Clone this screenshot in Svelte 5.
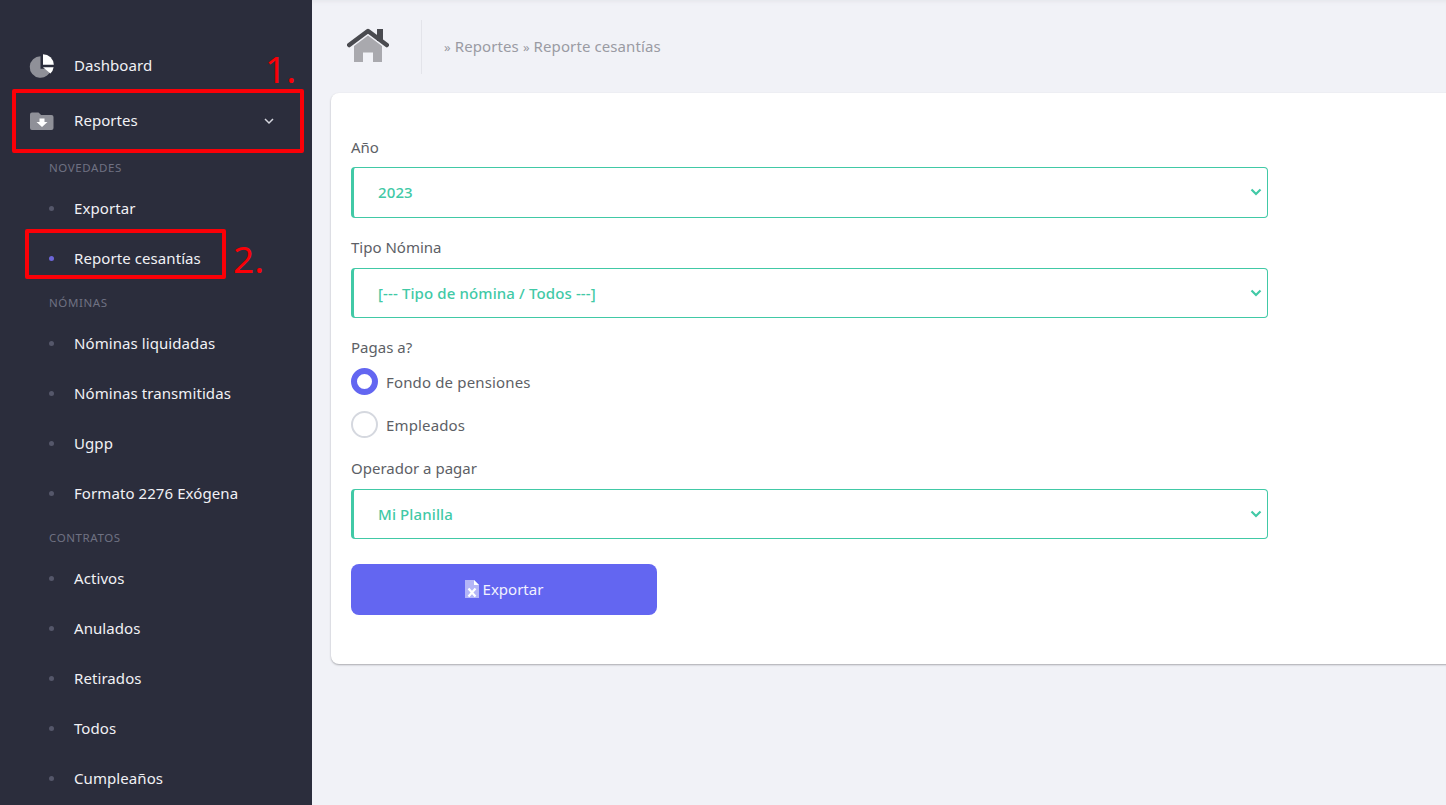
<script lang="ts">
  const groups = [
    { title: 'NOVEDADES', items: ['Exportar', 'Reporte cesantías'] },
    { title: 'NÓMINAS', items: ['Nóminas liquidadas', 'Nóminas transmitidas', 'Ugpp', 'Formato 2276 Exógena'] },
    { title: 'CONTRATOS', items: ['Activos', 'Anulados', 'Retirados', 'Todos', 'Cumpleaños'] }
  ];
  const active = 'Reporte cesantías';
  let pagas = $state('fondo');
</script>

<div class="layout">
  <aside class="sidebar">
    <a class="nav-item">
      <svg class="nav-icon" viewBox="0 0 26 26">
        <path d="M11.500 3.200a10.800 10.800 0 1 0 10.700 12.600H11.500z" fill="#8f9098" />
        <path d="M14 1.200a11 11 0 0 1 10.800 10.600H14z" fill="#fff" />
        <path d="M14 14.200h10.600a11 11 0 0 1-3.200 6.400z" fill="#fff" />
      </svg>
      <span>Dashboard</span>
    </a>
    <a class="nav-item">
      <svg class="nav-icon" viewBox="0 0 26 26">
        <path d="M1 6.500a2 2 0 0 1 2-2h6.500l2.600 2.600h10.400a2 2 0 0 1 2 2v11a2 2 0 0 1-2 2H3a2 2 0 0 1-2-2z" fill="#8f9098" />
        <path d="M10.500 10.500h5v3.500h3l-5.500 5-5.500-5h3z" fill="#fff" />
      </svg>
      <span>Reportes</span>
      <svg class="caret" viewBox="0 0 12 12"><path d="M2 4l4 4 4-4" fill="none" stroke="#d5d6de" stroke-width="1.500" /></svg>
    </a>
    {#each groups as group}
      <div class="nav-title">{group.title}</div>
      {#each group.items as item}
        <a class="sub-item" class:active={item === active}>
          <i class="dot"></i>
          <span>{item}</span>
        </a>
      {/each}
    {/each}
  </aside>

  <main class="main">
    <header class="page-head">
      <svg class="home" viewBox="0 0 42 36">
        <path d="M7 18 21 7.500 35 18v16h-9v-9.500H16V34H7z" fill="#a9a9ae" />
        <path d="M30 1h6v12h-6z" fill="#4a4b50" />
        <path d="M2.200 17 21 3l18.800 14" fill="none" stroke="#4a4b50" stroke-width="4.500" stroke-linecap="round" stroke-linejoin="round" />
      </svg>
      <div class="head-divider"></div>
      <div class="crumbs"><small>»</small> Reportes <small>»</small> Reporte cesantías</div>
    </header>

    <section class="card">
      <div class="field">
        <label for="anio">Año</label>
        <div class="select-wrap">
          <select id="anio" class="tall"><option>2023</option></select>
          <svg class="chevron" viewBox="0 0 12 8"><path d="M1.500 1.500 6 6l4.500-4.500" fill="none" stroke="#41c9a6" stroke-width="2.200" /></svg>
        </div>
      </div>
      <div class="field">
        <label for="tipo">Tipo Nómina</label>
        <div class="select-wrap">
          <select id="tipo"><option>[--- Tipo de nómina / Todos ---]</option></select>
          <svg class="chevron" viewBox="0 0 12 8"><path d="M1.500 1.500 6 6l4.500-4.500" fill="none" stroke="#41c9a6" stroke-width="2.200" /></svg>
        </div>
      </div>
      <div class="field radios">
        <div class="radio-label">Pagas a?</div>
        <label class="radio"><input type="radio" bind:group={pagas} value="fondo" /> <span>Fondo de pensiones</span></label>
        <label class="radio"><input type="radio" bind:group={pagas} value="empleados" /> <span>Empleados</span></label>
      </div>
      <div class="field">
        <label for="operador">Operador a pagar</label>
        <div class="select-wrap">
          <select id="operador"><option>Mi Planilla</option></select>
          <svg class="chevron" viewBox="0 0 12 8"><path d="M1.500 1.500 6 6l4.500-4.500" fill="none" stroke="#41c9a6" stroke-width="2.200" /></svg>
        </div>
      </div>
      <button class="export-btn" type="button">
        <svg viewBox="0 0 14 18" class="xls">
          <path d="M0 0h9l5 5v13H0z" fill="#b4b5f7" />
          <path d="M9 0l5 5H9z" fill="#fff" />
          <path d="M3.500 8.500l7 8M10.500 8.500l-7 8" stroke="#fff" stroke-width="2.200" />
        </svg>
        Exportar
      </button>
    </section>
  </main>

  <div class="mark mark-one"></div>
  <div class="mark mark-two"></div>
  <span class="mark-num num-one">1.</span>
  <span class="mark-num num-two">2.</span>
</div>

<style>
  :global(body) {
    margin: 0;
    background: #f1f2f7;
  }

  .layout {
    position: relative;
    display: flex;
    height: 805px;
    overflow: hidden;
    font-family: "Noto Sans", "Open Sans", sans-serif;
    font-size: 15px;
    color: #5d5f66;
  }

  .sidebar {
    width: 312px;
    flex-shrink: 0;
    padding-top: 38px;
    box-sizing: border-box;
    background: #2b2d3c;
    overflow: hidden;
  }

  .nav-item {
    display: flex;
    align-items: center;
    height: 55px;
    padding: 0 37px 0 29px;
    color: #f1f1f5;
    font-size: 15px;
    letter-spacing: 0.06px;
  }

  .nav-item span {
    margin-bottom: 2px;
  }

  .nav-icon {
    width: 26px;
    height: 26px;
    margin-right: 19px;
  }

  .caret {
    width: 12px;
    height: 12px;
    margin-left: auto;
  }

  .nav-title {
    height: 30px;
    padding: 5px 0 0 49px;
    line-height: 30px;
    font-size: 11.5px;
    letter-spacing: 0.6px;
    color: #6f7182;
  }

  .sub-item {
    display: flex;
    align-items: center;
    height: 50px;
    padding-left: 49px;
    color: #f1f1f5;
    font-size: 15px;
    letter-spacing: 0.08px;
  }

  .dot {
    width: 5px;
    height: 5px;
    margin-right: 20px;
    border-radius: 50%;
    background: #55576a;
  }

  .sub-item.active .dot {
    background: #6d66d8;
  }

  .main {
    flex: 1;
    min-width: 0;
    box-shadow: inset 0 5px 5px -4px #e2e3e8;
  }

  .page-head {
    display: flex;
    align-items: center;
    height: 93px;
    padding-left: 35px;
    box-sizing: border-box;
  }

  .home {
    width: 42px;
    height: 36px;
    margin-bottom: 2px;
  }

  .head-divider {
    width: 1px;
    height: 54px;
    margin: 0 22px 0 32px;
    background: #e3e4ea;
  }

  .crumbs {
    margin-bottom: 2px;
    color: #9a9ba3;
    font-size: 15px;
    letter-spacing: 0.1px;
  }

  .crumbs small {
    font-size: 13px;
  }

  .card {
    width: 1200px;
    height: 571px;
    margin-left: 19px;
    padding: 41px 20px 0;
    box-sizing: border-box;
    background: #fff;
    border-radius: 8px;
    box-shadow: 0 1px 2px #a8a9ae;
  }

  .field {
    width: 917px;
    margin-bottom: 17px;
  }

  .field label,
  .radio-label {
    display: block;
    height: 24px;
    line-height: 24px;
    margin-bottom: 9px;
  }

  .field:first-child label {
    line-height: 26px;
  }

  .select-wrap {
    position: relative;
  }

  select {
    display: block;
    width: 100%;
    height: 50px;
    padding: 0 40px 0 24px;
    box-sizing: border-box;
    appearance: none;
    background: #fff;
    border: 1px solid #41c9a6;
    border-left-width: 3px;
    border-radius: 4px;
    outline: none;
    color: #41c9a6;
    font: 500 15px "Noto Sans", "Open Sans", sans-serif;
    letter-spacing: 0.12px;
  }

  select.tall {
    height: 51px;
    padding-bottom: 2px;
  }

  .chevron {
    position: absolute;
    right: 6px;
    top: 21px;
    width: 12px;
    height: 8px;
  }

  .radios {
    margin-bottom: 18px;
  }

  .field label.radio {
    display: flex;
    align-items: center;
    height: 27px;
    line-height: 27px;
    margin-bottom: 16px;
    letter-spacing: 0.15px;
  }

  .field label.radio:last-child {
    margin-bottom: 0;
  }

  .radio span {
    margin-top: 2px;
  }

  input[type='radio'] {
    width: 27px;
    height: 27px;
    margin: 0 8px 0 0;
    box-sizing: border-box;
    appearance: none;
    border: 2px solid #d5d8df;
    border-radius: 50%;
    background: #fff;
  }

  input[type='radio']:checked {
    border: 6px solid #6366f1;
  }

  .export-btn {
    display: flex;
    align-items: center;
    justify-content: center;
    gap: 4px;
    width: 306px;
    height: 51px;
    margin-top: 25px;
    padding-bottom: 2px;
    background: #6366f1;
    border: none;
    border-radius: 8px;
    color: #f1f1fe;
    font: 15px "Noto Sans", "Open Sans", sans-serif;
  }

  .xls {
    width: 14px;
    height: 18px;
  }

  .mark {
    position: absolute;
    border: 4px solid #fb0007;
    box-sizing: border-box;
    border-radius: 2px;
  }

  .mark-one {
    left: 12px;
    top: 89px;
    width: 292px;
    height: 64px;
  }

  .mark-two {
    left: 25px;
    top: 229px;
    width: 201px;
    height: 50px;
  }

  .mark-num {
    position: absolute;
    color: #fb0007;
    font-family: "Noto Sans", sans-serif;
    font-size: 37px;
    line-height: 40px;
  }

  .num-one {
    left: 265px;
    top: 49px;
  }

  .num-two {
    left: 233px;
    top: 239px;
  }
</style>
